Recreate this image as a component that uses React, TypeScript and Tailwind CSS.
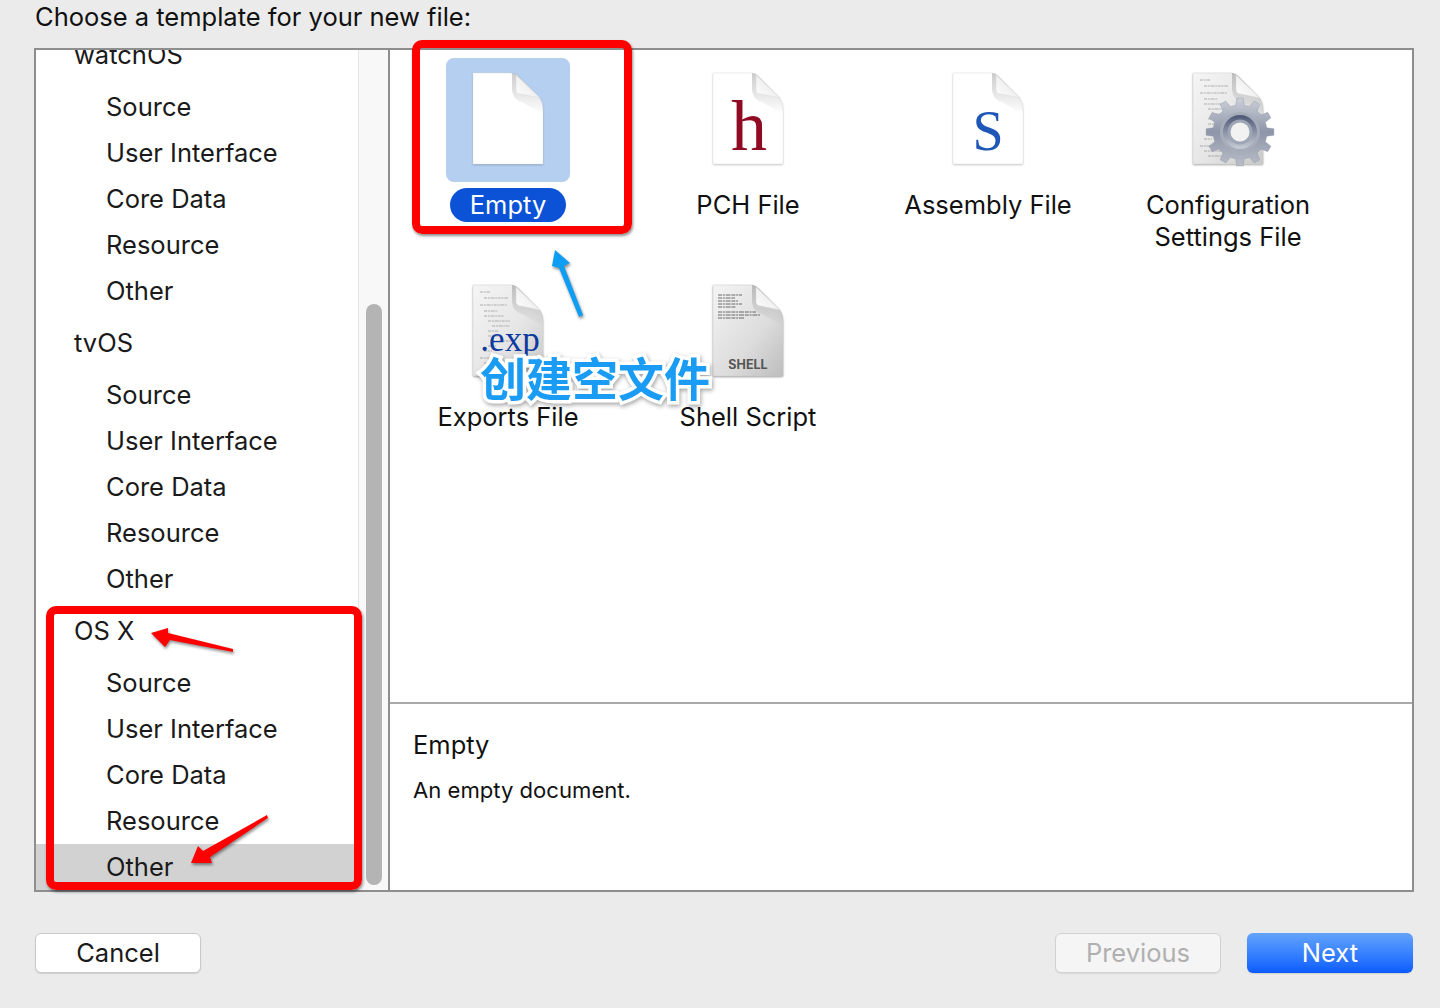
import React from "react";

const ui = { fontFamily: "Inter, 'Liberation Sans', sans-serif" };

const PAGE = "M27 15H64Q69 15 72 18L93 39Q97 44 97 52V106H27Z";
const FOLD = "M70 17V31Q70 36 75 36L94 40Z";

function Fold({ id }: { id: string }) {
  return (
    <>
      <defs>
        <linearGradient id={id} x1="0" y1="1" x2="1" y2="0">
          <stop offset="0" stopColor="#ffffff" />
          <stop offset="1" stopColor="#e2e2e2" />
        </linearGradient>
        <linearGradient id={`${id}-s`} x1="0" y1="0" x2="0" y2="1">
          <stop offset="0" stopColor="#000" stopOpacity="0.2" />
          <stop offset="1" stopColor="#000" stopOpacity="0" />
        </linearGradient>
      </defs>
      <path d="M66 15Q69 15 72 18L93 39Q97 44 97 52V56L76 44Q67 42 66 32Z" fill={`url(#${id}-s)`} />
      <path d={FOLD} fill={`url(#${id})`} stroke="#d6d6d6" strokeWidth="0.4" />
    </>
  );
}

function PlainDoc({ id, children }: { id: string; children?: React.ReactNode }) {
  return (
    <svg width="124" height="124" viewBox="0 0 124 124" className="block">
      <path d={PAGE} fill="#000" opacity="0.22" transform="translate(0 1)" className="blur-[1px]" />
      <path d={PAGE} fill="#ffffff" stroke="#dcdcdc" strokeWidth="0.4" />
      <Fold id={id} />
      {children}
    </svg>
  );
}

const codeLines: [number, number, number][] = [
  [34, 22, 10], [38, 28, 24], [34, 35, 27], [38, 41, 14], [38, 46, 20], [42, 51, 22], [46, 56, 18],
  [42, 61, 10], [42, 66, 14], [46, 71, 22], [42, 76, 8], [38, 81, 8], [34, 88, 12], [38, 93, 22], [42, 98, 18],
];

function CodeLines() {
  return (
    <>
      {codeLines.map(([x, y, w], i) => (
        <line
          key={i}
          x1={x}
          y1={y}
          x2={x + w}
          y2={y}
          stroke="#555"
          strokeWidth="0.7"
          strokeDasharray="3 0.8 2 0.8 4 0.8 1.5 0.8"
          opacity="0.6"
        />
      ))}
    </>
  );
}

function CodeDoc({ id, children }: { id: string; children?: React.ReactNode }) {
  return (
    <svg width="124" height="124" viewBox="0 0 124 124" className="block">
      <defs>
        <linearGradient id={`${id}-p`} x1="0" y1="0" x2="1" y2="1">
          <stop offset="0" stopColor="#f5f5f5" />
          <stop offset="0.55" stopColor="#e6e6e6" />
          <stop offset="1" stopColor="#c8c8c8" />
        </linearGradient>
      </defs>
      <path d={PAGE} fill="#000" opacity="0.35" transform="translate(0 1)" className="blur-[1px]" />
      <path d={PAGE} fill={`url(#${id}-p)`} stroke="#cdcdcd" strokeWidth="0.4" />
      <CodeLines />
      <Fold id={id} />
      {children}
    </svg>
  );
}

function gearPath(cx: number, cy: number, ro: number, ri: number, teeth: number) {
  let d = "";
  const step = (Math.PI * 2) / teeth;
  for (let i = 0; i < teeth; i++) {
    const a = i * step;
    const pts: [number, number][] = [
      [ri, a - step * 0.5],
      [ri, a - step * 0.3],
      [ro, a - step * 0.18],
      [ro, a + step * 0.18],
      [ri, a + step * 0.3],
    ];
    for (const [r, t] of pts) {
      const x = (cx + r * Math.cos(t)).toFixed(2);
      const y = (cy + r * Math.sin(t)).toFixed(2);
      d += `${d ? "L" : "M"}${x} ${y}`;
    }
  }
  return d + "Z";
}

function ConfigIcon() {
  return (
    <CodeDoc id="cfg">
      <defs>
        <linearGradient id="gearG" x1="0" y1="0" x2="0" y2="1">
          <stop offset="0" stopColor="#ccd0d9" />
          <stop offset="0.5" stopColor="#8d95a8" />
          <stop offset="1" stopColor="#b9bdc8" />
        </linearGradient>
        <linearGradient id="gearR" x1="0" y1="0" x2="0" y2="1">
          <stop offset="0" stopColor="#4a5673" />
          <stop offset="1" stopColor="#c9cdd6" />
        </linearGradient>
      </defs>
      <path d={gearPath(74, 74, 34, 27, 12)} fill="url(#gearG)" stroke="#868da0" strokeWidth="0.4" />
      <circle cx="74" cy="74" r="20" fill="#a6acba" />
      <circle cx="74" cy="74" r="17" fill="url(#gearR)" />
      <circle cx="74" cy="74" r="12.5" fill="#9ea5b5" />
      <circle cx="74" cy="74" r="9.5" fill="#f2f2f2" />
    </CodeDoc>
  );
}

function ShellIcon() {
  const lines: [number, number, number][] = [
    [32, 25, 24], [32, 28, 17], [32, 31, 20], [32, 34, 24], [32, 37, 18],
    [32, 42, 38], [32, 45, 42], [32, 48, 26],
  ];
  return (
    <svg width="124" height="124" viewBox="0 0 124 124" className="block">
      <defs>
        <linearGradient id="shP" x1="0" y1="0" x2="1" y2="1">
          <stop offset="0" stopColor="#f4f4f4" />
          <stop offset="0.6" stopColor="#dcdcdc" />
          <stop offset="1" stopColor="#bdbdbd" />
        </linearGradient>
      </defs>
      <path d={PAGE} fill="#000" opacity="0.4" transform="translate(0 1)" className="blur-[1px]" />
      <path d={PAGE} fill="url(#shP)" stroke="#c6c6c6" strokeWidth="0.4" />
      {lines.map(([x, y, w], i) => (
        <line
          key={i}
          x1={x}
          y1={y}
          x2={x + w}
          y2={y}
          stroke="#222"
          strokeWidth="0.8"
          strokeDasharray="4 0.8 2 0.8 5 0.8"
          opacity="0.8"
        />
      ))}
      <Fold id="shF" />
      <text x="62" y="99" textAnchor="middle" fontSize="12.5" fontWeight="700" fill="#555" fontFamily="Inter, sans-serif">
        SHELL
      </text>
    </svg>
  );
}

function Template({
  label,
  icon,
  selected,
}: {
  label: React.ReactNode;
  icon: React.ReactNode;
  selected?: boolean;
}) {
  return (
    <div className="w-[240px] flex flex-col items-center pt-2">
      <div className={`w-[124px] h-[124px] rounded-lg ${selected ? "bg-[#b5cff0]" : ""}`}>{icon}</div>
      <div
        className={`mt-[6px] text-center text-[25.5px] leading-[32px] ${
          selected ? "w-[116px] h-[34px] rounded-[17px] bg-[#0b52d6] text-white leading-[34px]" : "text-[#111] pt-px"
        }`}
      >
        {label}
      </div>
    </div>
  );
}

function Row({ children, header, active }: { children: string; header?: boolean; active?: boolean }) {
  return (
    <div
      className={`h-[46px] leading-[46px] text-[25.5px] text-[#1a1a1a] whitespace-nowrap ${
        header ? "pl-[38px]" : "pl-[70px]"
      } ${active ? "bg-[#d2d2d2]" : ""}`}
    >
      {children}
    </div>
  );
}

function Group({ name, active }: { name: string; active?: boolean }) {
  return (
    <div className="flex flex-col mb-[6px]">
      <Row header>{name}</Row>
      <div className="h-[6px]" />
      <Row>Source</Row>
      <Row>User Interface</Row>
      <Row>Core Data</Row>
      <Row>Resource</Row>
      <Row active={active}>Other</Row>
    </div>
  );
}

export default function App() {
  return (
    <div className="relative w-[1440px] h-[1008px] overflow-hidden bg-[#ebebeb]" style={ui}>
      <div className="h-[48px] pl-[35px] text-[25.5px] leading-[34px] text-[#111]">Choose a template for your new file:</div>

      <div className="mx-[34px] h-[844px] w-[1380px] border-2 border-[#8e8e8e] flex bg-white">
        <div className="w-[354px] shrink-0 flex border-r-2 border-[#8e8e8e] overflow-hidden">
          <div className="w-[322px] shrink-0 -mt-[18px] bg-white overflow-hidden">
            <Group name="watchOS" />
            <Group name="tvOS" />
            <Group name="OS X" active />
          </div>
          <div className="flex-1 bg-[#f8f8f8] border-l border-[#e6e6e6] flex flex-col justify-end pb-[5px] items-center">
            <div className="w-[16px] h-[581px] rounded-lg bg-[#b4b4b4]" />
          </div>
        </div>

        <div className="flex-1 flex flex-col min-w-0">
          <div className="h-[652px] border-b-2 border-[#a9a9a9] box-content">
            <div className="grid grid-cols-[repeat(4,240px)] auto-rows-[212px] -ml-[2px]">
              <Template label="Empty" selected icon={<PlainDoc id="f1" />} />
              <Template
                label="PCH File"
                icon={
                  <PlainDoc id="f2">
                    <text x="63" y="92" textAnchor="middle" fontSize="72" fill="#8f0a22" fontFamily="'Liberation Serif', serif">
                      h
                    </text>
                  </PlainDoc>
                }
              />
              <Template
                label="Assembly File"
                icon={
                  <PlainDoc id="f3">
                    <text x="62" y="92" textAnchor="middle" fontSize="56" fill="#1f57b8" fontFamily="'Liberation Serif', serif">
                      S
                    </text>
                  </PlainDoc>
                }
              />
              <Template
                label={
                  <>
                    Configuration
                    <br />
                    Settings File
                  </>
                }
                icon={<ConfigIcon />}
              />
              <Template
                label="Exports File"
                icon={
                  <CodeDoc id="f5">
                    <text x="64" y="81" textAnchor="middle" fontSize="35" fill="#0d3aa0" fontFamily="'Liberation Serif', serif">
                      .exp
                    </text>
                  </CodeDoc>
                }
              />
              <Template label="Shell Script" icon={<ShellIcon />} />
            </div>
          </div>
          <div className="flex-1 pl-[23px] pt-[24px] text-[#111]">
            <div className="text-[25.5px] leading-[34px]">Empty</div>
            <div className="mt-[13px] text-[22.1px] leading-[30px]">An empty document.</div>
          </div>
        </div>
      </div>

      <div className="flex justify-between w-[1378px] ml-[35px] mt-[41px]">
        <button className="w-[166px] h-[40px] rounded-md bg-white border border-[#c9c9c9] shadow-[0_1px_1px_rgba(0,0,0,0.12)] text-[25.5px] leading-[36px] text-[#1a1a1a]">
          Cancel
        </button>
        <div className="flex gap-[26px]">
          <button className="w-[166px] h-[40px] rounded-md bg-[#f5f5f5] border border-[#d2d2d2] shadow-[0_1px_1px_rgba(0,0,0,0.08)] text-[25.5px] leading-[36px] text-[#b0b0b0]">
            Previous
          </button>
          <button className="w-[166px] h-[40px] rounded-md bg-gradient-to-b from-[#62a3fb] to-[#0a5bff] shadow-[0_1px_1px_rgba(0,0,0,0.12)] text-[25.5px] leading-[40px] text-white">
            Next
          </button>
        </div>
      </div>

      {/* Annotations drawn on top of the screenshot */}
      <div className="absolute left-[412px] top-[40px] w-[220px] h-[194px] rounded-[10px] border-[8px] border-[#fe0000] shadow-[1px_2px_3px_rgba(0,0,0,0.45)]" />
      <div className="absolute left-[46px] top-[606px] w-[316px] h-[284px] rounded-[10px] border-[8px] border-[#fe0000] shadow-[1px_2px_3px_rgba(0,0,0,0.45)]" />

      <svg
        width="1440"
        height="1008"
        viewBox="0 0 1440 1008"
        className="absolute inset-0 pointer-events-none drop-shadow-[1px_2px_1.5px_rgba(0,0,0,0.45)]"
      >
        <polygon points="555,250 570,263 564,266 583,315 579,317 559,268 552,266" fill="#0d9df2" />
        <polygon points="151,633 168,628 168,633 233,649 233,652 170,640 165,647" fill="#fe0000" />
        <polygon points="191,863 198,846 203,851 267,815 268,818 210,857 212,863" fill="#fe0000" />
      </svg>

      <div
        className="absolute left-[480px] top-[345px] text-[46px] leading-[62px] whitespace-nowrap font-bold text-[#1a9cf4] [-webkit-text-stroke:7px_white] [paint-order:stroke_fill] drop-shadow-[1px_2px_2px_rgba(0,0,0,0.35)]"
        style={{ fontFamily: "'Noto Sans CJK SC', sans-serif" }}
      >
        创建空文件
      </div>
    </div>
  );
}
